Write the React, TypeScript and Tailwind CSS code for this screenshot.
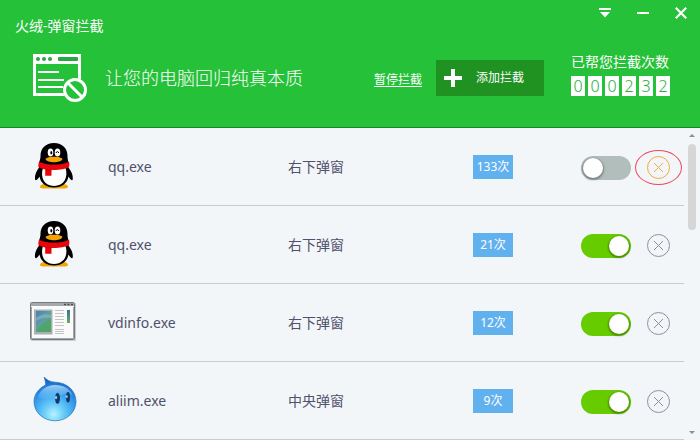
import { useState } from "react";
import type { ReactNode } from "react";
import clsx from "clsx";

interface Rule {
  id: number;
  icon: ReactNode;
  name: string;
  position: string;
  count: number;
  enabled: boolean;
  highlighted?: boolean;
}

const PenguinIcon = () => (
  <svg viewBox="0 0 48 48" className="size-12" aria-hidden="true">
    <path d="M10 44c0-3 6-4 14-4s14 1 14 4c0 2-6 1.500-14 1.500S10 46 10 44z" fill="#f0a800" />
    <path
      d="M24 0C15.500 0 10.500 5.500 10.500 13c0 2-.5 4-1.500 6.500 0 2 .4 3.500 0 5C6.500 28 4.500 32 5 36c.3 2.200 2 1.500 4.500-2.500C10.500 40 16 44.500 24 44.500S37.500 40 38.500 33.500c2.500 4 4 4.700 4.300 2.500.4-4-1.800-8-4.300-11.500-.4-1.500.5-3 .2-5-1-2.500-1.200-4.500-1.200-6.500C37.500 5.500 32.500 0 24 0z"
      fill="#000"
    />
    <path d="M13 25h22.500c3 9-1.500 18-11.500 18S10 34 13 25z" fill="#fff" />
    <ellipse cx="20.500" cy="9.500" rx="2.800" ry="4" fill="#fff" />
    <ellipse cx="27.500" cy="9.500" rx="2.800" ry="4" fill="#fff" />
    <ellipse cx="21.300" cy="9.700" rx="1" ry="1.800" fill="#000" />
    <path d="M26 10c.3-1.800 2.400-1.800 2.800 0" fill="none" stroke="#000" strokeWidth="1" />
    <path d="M15.500 16c2-3 15-3 17 0-1.500 4.300-15.500 4.300-17 0z" fill="#f7a300" />
    <path d="M9 18.800c8 3.800 22 3.800 30 0 .6 2.500.5 4 0 5.200-3.500 2-10 3.300-17.500 3v5.800h-6.300v-6.300C12.500 26 10 25 8.500 24c-.3-1.500 0-3.500.5-5.200z" fill="#e8060c" />
    <path d="M15.500 26.500c2 .5 4 .6 6 .5" fill="none" stroke="#b00008" strokeWidth=".7" />
  </svg>
);

const WindowIcon = () => (
  <svg viewBox="0 0 48 48" className="size-12" aria-hidden="true">
    <defs>
      <linearGradient id="window-photo" x1="0" y1="0" x2="1" y2="1">
        <stop offset="0" stopColor="#4d7fb5" />
        <stop offset=".45" stopColor="#5d9fa0" />
        <stop offset="1" stopColor="#4fa566" />
      </linearGradient>
      <linearGradient id="window-bar" x1="0" y1="0" x2="0" y2="1">
        <stop offset="0" stopColor="#3a6ea5" />
        <stop offset="1" stopColor="#62b05c" />
      </linearGradient>
    </defs>
    <rect x="1" y="4" width="45" height="38" rx="1" fill="#c9cdd0" />
    <rect x=".5" y="3.500" width="44" height="37" rx="1" fill="#fafafa" stroke="#777b80" />
    <rect x="1" y="4" width="43" height="3" fill="#a5a9ad" />
    <path d="M34 5.500h2M37.500 5.500h2M41 5.500h2" stroke="#4b4f55" strokeWidth="1.500" />
    <path d="M1.500 8v31.500M43.500 8v31.500M1 39.500h43" stroke="#a2a6aa" />
    <rect x="4" y="10.500" width="18.500" height="25" fill="#a9b0b4" />
    <rect x="6" y="12" width="15" height="21" fill="url(#window-photo)" />
    <path d="M6 22c5-3 9-4 15-3v-3c-6-2-11 0-15 3z" fill="#86b5c4" opacity=".7" />
    <path d="M6 33c2-6 8-10 15-12v12z" fill="#4da760" opacity=".7" />
    <path d="M25 11.500h9M25 14.500h9M25 17.500h9M25 20.500h9M25 23.500h9M25 26.500h9M25 30.500h9M25 32.500h9M25 34.500h9" stroke="#c2c4c6" />
    <rect x="37" y="11" width="3" height="13" fill="url(#window-bar)" />
  </svg>
);

const DropletIcon = () => (
  <svg viewBox="0 0 48 48" className="size-12" aria-hidden="true">
    <defs>
      <radialGradient id="droplet-body" cx=".47" cy=".85" r=".85">
        <stop offset="0" stopColor="#b5f3ff" />
        <stop offset=".3" stopColor="#64c9f8" />
        <stop offset=".65" stopColor="#2f95e8" />
        <stop offset="1" stopColor="#1255b5" />
      </radialGradient>
      <linearGradient id="droplet-shine" x1="0" y1="0" x2="0" y2="1">
        <stop offset="0" stopColor="#c9ecff" stopOpacity=".75" />
        <stop offset="1" stopColor="#8fd0fb" stopOpacity=".1" />
      </linearGradient>
    </defs>
    <path
      d="M14 0c3 3 6 5 11 5.200C37 5.500 46 13.500 46 24.500c0 11-9.500 19.300-21 19.300S4 35.500 4 24.500C4 17.500 8.500 11.500 15.500 8 15.800 5.500 15 2.500 14 0z"
      fill="url(#droplet-body)"
      stroke="#2a75c4"
      strokeWidth=".7"
    />
    <path d="M8 20c2-7 8.500-12 17-12s15 4 17.500 10c-5-2-10-1-16 1.500S12 23 8 20z" fill="url(#droplet-shine)" />
    <ellipse cx="27.500" cy="21.300" rx="2.500" ry="5.500" fill="#123a66" />
    <ellipse cx="38" cy="20.200" rx="2" ry="5.300" fill="#123a66" />
    <ellipse cx="26" cy="20.500" rx="1.200" ry="1.700" fill="#7fc9f5" />
    <ellipse cx="36.700" cy="19.500" rx="1.100" ry="1.600" fill="#7fc9f5" />
  </svg>
);

const BlockedWindowIcon = () => (
  <svg viewBox="0 0 54 48" className="h-12 w-[54px] shrink-0" aria-hidden="true">
    <path d="M0 0h48v42H0z" fill="#fff" />
    <path d="M3 10h42v29H3z" fill="#25c139" />
    <g fill="#25a940">
      <circle cx="5" cy="5" r="2" />
      <circle cx="11" cy="5" r="2" />
      <circle cx="17" cy="5" r="2" />
      <rect x="25" y="3" width="20" height="4" rx="1" />
    </g>
    <path d="M5 18h21M5 26h26M5 33h25" stroke="#fff" strokeWidth="2" />
    <circle cx="42" cy="36" r="12" fill="#25c139" />
    <circle cx="42" cy="36" r="10.500" fill="none" stroke="#fff" strokeWidth="3" />
    <path d="M35 29l14 14" stroke="#fff" strokeWidth="3" />
  </svg>
);

const initialRules: Rule[] = [
  { id: 1, icon: <PenguinIcon />, name: "qq.exe", position: "右下弹窗", count: 133, enabled: false, highlighted: true },
  { id: 2, icon: <PenguinIcon />, name: "qq.exe", position: "右下弹窗", count: 21, enabled: true },
  { id: 3, icon: <WindowIcon />, name: "vdinfo.exe", position: "右下弹窗", count: 12, enabled: true },
  { id: 4, icon: <DropletIcon />, name: "aliim.exe", position: "中央弹窗", count: 9, enabled: true },
];

const WindowControls = () => (
  <div className="flex gap-3 pt-px pr-1.5">
    <button aria-label="菜单" className="flex h-6 w-[26px] items-center justify-center">
      <svg viewBox="0 0 12 10" className="h-2.5 w-3" fill="#fff">
        <path d="M0 0h12v2H0zM1 4h10L6 9.500z" />
      </svg>
    </button>
    <button aria-label="最小化" className="flex h-6 w-[26px] items-center justify-center">
      <span className="h-0.5 w-3 bg-white" />
    </button>
    <button aria-label="关闭" className="flex h-6 w-[26px] items-center justify-center">
      <svg viewBox="0 0 12 12" className="size-3" stroke="#fff" strokeWidth="2.200">
        <path d="M.8.8l10.400 10.400M11.200.8L.8 11.200" />
      </svg>
    </button>
  </div>
);

const Header = ({ total }: { total: string }) => (
  <header className="border-b border-[#128a22] bg-[#25c139] pb-[23px] text-white">
    <div className="flex items-start justify-between">
      <h1 className="pt-4 pl-[15px] text-sm leading-5">火绒-弹窗拦截</h1>
      <WindowControls />
    </div>
    <div className="mt-4 flex h-[52px] items-center pr-[30px] pl-[33px]">
      <BlockedWindowIcon />
      <p className="ml-[18px] text-lg font-light whitespace-nowrap">让您的电脑回归纯真本质</p>
      <a href="#pause" className="ml-auto pt-1 text-xs whitespace-nowrap underline underline-offset-2">
        暂停拦截
      </a>
      <button className="ml-3.5 flex h-9 w-[108px] items-center bg-[#1f9222] pl-2 text-xs">
        <svg viewBox="0 0 18 18" className="size-[18px]" fill="#fff" aria-hidden="true">
          <path d="M7 0h4v7h7v4h-7v7H7v-7H0V7h7z" />
        </svg>
        <span className="ml-3.5">添加拦截</span>
      </button>
      <div className="ml-[27px] self-start">
        <p className="text-sm leading-5 whitespace-nowrap">已帮您拦截次数</p>
        <div className="mt-1 flex gap-[3px]">
          {total.split("").map((digit, i) => (
            <span key={i} className="h-5 w-3.5 bg-white text-center text-base leading-5 font-light text-[#25b138]">
              {digit}
            </span>
          ))}
        </div>
      </div>
    </div>
  </header>
);

const RuleRow = ({ rule, onToggle, onRemove }: { rule: Rule; onToggle: () => void; onRemove: () => void }) => (
  <tr className="h-[78px] *:border-b *:border-[#c8ccd0]">
    <td className="w-[108px] pl-[30px]">{rule.icon}</td>
    <td className="w-[180px]">{rule.name}</td>
    <td>{rule.position}</td>
    <td className="w-[108px]">
      <span className="block h-6 w-10 bg-[#62b1ef] text-center text-xs leading-6 text-white">{rule.count}次</span>
    </td>
    <td className="w-[66px] pt-0.5">
      <input
        type="checkbox"
        role="switch"
        aria-label={`${rule.name} ${rule.position}`}
        checked={rule.enabled}
        onChange={onToggle}
        className="block h-6 w-[50px] appearance-none rounded-full bg-[#b1bebb] p-0.5 before:block before:size-5 before:rounded-full before:bg-white before:shadow-[0_1px_2px_1px_rgba(0,0,0,0.3)] checked:bg-[#66cc00] checked:before:ml-auto"
      />
    </td>
    <td className="w-[37px] pt-0.5">
      <button
        aria-label={`删除 ${rule.name}`}
        onClick={onRemove}
        className={clsx("relative block size-[23px]", rule.highlighted ? "text-[#f0ab3c]" : "text-[#8d909b]")}
      >
        <svg viewBox="0 0 23 23" className="size-full" fill="none" stroke="currentColor">
          <circle cx="11.500" cy="11.500" r="11" />
          <path d="M7 7l9 9M16 7l-9 9" />
        </svg>
        {rule.highlighted && (
          <span className="absolute -inset-x-3 -inset-y-1.5 rounded-[50%] border border-[#ee4a5a]" />
        )}
      </button>
    </td>
  </tr>
);

const Scrollbar = () => (
  <div className="flex w-4 flex-col items-center justify-between py-1.5" aria-hidden="true">
    <div className="flex flex-col items-center gap-[7px]">
      <svg viewBox="0 0 6 3" className="h-[3px] w-1.5" fill="#8a8f93">
        <path d="M0 3l3-3 3 3z" />
      </svg>
      <div className="h-[86px] w-2 rounded-full bg-[#d6d6d6]" />
    </div>
    <svg viewBox="0 0 6 3" className="h-[3px] w-1.5" fill="#8a8f93">
      <path d="M0 0l3 3 3-3z" />
    </svg>
  </div>
);

export default function App() {
  const [rules, setRules] = useState(initialRules);

  const toggle = (id: number) =>
    setRules((prev) => prev.map((r) => (r.id === id ? { ...r, enabled: !r.enabled } : r)));
  const remove = (id: number) => setRules((prev) => prev.filter((r) => r.id !== id));

  return (
    <main className="min-h-screen bg-[#f2f6f9] font-['Noto_Sans','Noto_Sans_CJK_SC',sans-serif] text-[#50506a]">
      <Header total="000232" />
      <div className="flex">
        <table className="flex-1 table-fixed border-separate border-spacing-0 text-left text-sm">
          <tbody>
            {rules.map((rule) => (
              <RuleRow
                key={rule.id}
                rule={rule}
                onToggle={() => toggle(rule.id)}
                onRemove={() => remove(rule.id)}
              />
            ))}
          </tbody>
        </table>
        <Scrollbar />
      </div>
    </main>
  );
}
